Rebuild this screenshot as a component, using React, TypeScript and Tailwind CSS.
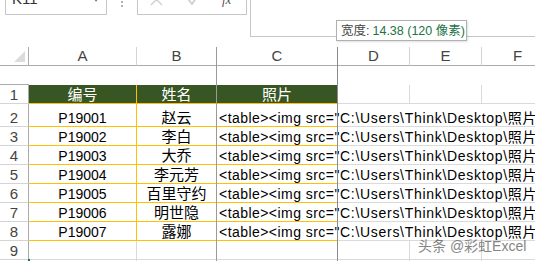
import React from "react";

const FONT = {
  fontFamily: '"Liberation Sans", "Noto Sans CJK SC", sans-serif',
};

const people = [
  ["P19001", "赵云"],
  ["P19002", "李白"],
  ["P19003", "大乔"],
  ["P19004", "李元芳"],
  ["P19005", "百里守约"],
  ["P19006", "明世隐"],
  ["P19007", "露娜"],
];

const cols = ["A", "B", "C", "D", "E", "F"];
const GRID = "grid grid-cols-[29px_108px_80px_121px_72px_72px_72px]";

function RowHead({ n, h }: { n: number; h: string }) {
  return (
    <div
      className={`${h} flex items-end justify-center border-r border-b border-r-[#ababab] border-b-[#d4d4d4] text-[15px] leading-[17px] text-[#444]`}
    >
      {n}
    </div>
  );
}

function Empty({ h, noRight }: { h: string; noRight?: boolean }) {
  return (
    <div
      className={`${h} border-b border-[#dadada] ${noRight ? "" : "border-r"}`}
    />
  );
}

export default function App() {
  return (
    <div
      className="relative h-[261px] w-[535px] overflow-hidden bg-white text-black"
      style={FONT}
    >
      {/* formula bar, cut at the top */}
      <div className="flex h-[47px] items-start">
        <div className="ml-[5px] mt-[-15px] flex h-[30px] w-[102px] items-center justify-between border-x border-b border-[#c6c6c6] px-[6px] text-[15px] text-[#333]">
          <span>K11</span>
          <span className="text-[8px] text-[#666]">▼</span>
        </div>
        <div className="ml-[13px] flex w-[4px] flex-col items-center gap-[2px] pt-[1px]">
          <span className="h-[2px] w-[2px] rounded-full bg-[#999]" />
          <span className="h-[2px] w-[2px] rounded-full bg-[#999]" />
        </div>
        <div className="ml-[13px] mt-[-15px] flex h-[30px] w-[110px] items-center border-x border-b border-[#c6c6c6]">
          <svg className="ml-[12px]" width="13" height="13" viewBox="0 0 13 13">
            <path d="M1 1 L12 12 M12 1 L1 12" stroke="#cfcfcf" strokeWidth="1.4" />
          </svg>
          <svg className="ml-[24px]" width="13" height="13" viewBox="0 0 13 13">
            <path d="M1 6 L5 11 L12 1" stroke="#cfcfcf" strokeWidth="1.8" fill="none" />
          </svg>
          <span className="ml-[22px] font-['Liberation_Serif'] text-[13px] italic text-[#555]">
            fx
          </span>
        </div>
        <div className="ml-[3px] h-[37px] flex-1 border-l border-b border-[#c6c6c6]" />
      </div>

      {/* column header */}
      <div className={GRID}>
        <div className="relative h-[19px] border-r border-b border-r-[#ababab] border-b-[#ababab]">
          <svg className="absolute left-[14px] top-[4px]" width="11" height="11" viewBox="0 0 11 11">
            <path d="M11 0 L11 11 L0 11 Z" fill="#dcdcdc" />
          </svg>
        </div>
        {cols.map((c) => (
          <div
            key={c}
            className="flex h-[19px] items-end justify-center border-r border-b border-r-[#d4d4d4] border-b-[#ababab] text-[15px] leading-[18px] text-[#444]"
          >
            {c}
          </div>
        ))}
        <div className="h-[19px] border-b border-[#ababab]" />
      </div>

      {/* row 1: header */}
      <div className={GRID}>
        <RowHead n={1} h="h-[19px]" />
        <div className="flex h-[19px] items-end justify-center border-r border-b border-[#ffc000] bg-[#375623] text-[15px] leading-[17px] text-white">
          编号
        </div>
        <div className="flex h-[19px] items-end justify-center border-r border-b border-[#ffc000] bg-[#375623] text-[15px] leading-[17px] text-white">
          姓名
        </div>
        <div className="flex h-[19px] items-end justify-center border-r border-b border-[#ffc000] bg-[#375623] text-[15px] leading-[17px] text-white">
          照片
        </div>
        <Empty h="h-[19px]" />
        <Empty h="h-[19px]" />
        <Empty h="h-[19px]" />
      </div>

      {/* data rows */}
      {people.map(([id, name], i) => {
        const h = i === 0 ? "h-[23px]" : "h-[19px]";
        return (
          <div key={id} className={GRID}>
            <RowHead n={i + 2} h={h} />
            <div
              className={`${h} flex items-end justify-center border-r border-b border-[#ffc000] text-[14px] leading-[16px]`}
            >
              {id}
            </div>
            <div
              className={`${h} flex items-end justify-center border-r border-b border-[#ffc000] text-[15px] leading-[17px]`}
            >
              {name}
            </div>
            <div
              className={`${h} flex items-end whitespace-nowrap border-r border-b border-[#ffc000] pl-[2px] text-[14px] leading-[16px]`}
            >
              <span className="tracking-[0.45px]">{"<table><img src="}</span>
              <span className="tracking-[0.7px]">
                {'"C:\\Users\\Think\\Desktop\\照片\\' + name + '.jpg" width="100" height="120"></table>'}
              </span>
            </div>
            <Empty h={h} noRight />
            <Empty h={h} noRight />
            <Empty h={h} noRight />
          </div>
        );
      })}

      {/* empty rows */}
      {[9, 10, 11].map((n) => (
        <div key={n} className={GRID}>
          <RowHead n={n} h="h-[19px]" />
          <Empty h="h-[19px]" />
          <Empty h="h-[19px]" />
          <Empty h="h-[19px]" />
          <Empty h="h-[19px]" />
          <Empty h="h-[19px]" />
          <Empty h="h-[19px]" />
        </div>
      ))}

      {/* column resize guides */}
      <div className="absolute left-[216px] top-[47px] h-[214px] w-px bg-[#9a9a9a]" />
      <div className="absolute left-[337px] top-[47px] h-[214px] w-px bg-[#8c8c8c]" />

      {/* tooltip */}
      <div className="absolute left-[336px] top-[20px] flex h-[21px] w-[131px] items-center whitespace-nowrap border border-[#b0b0b0] bg-white pl-[4px] text-[12.5px] leading-[16px] shadow-[1px_1px_2px_rgba(0,0,0,0.12)]">
        <span className="text-[#444]">宽度:</span>
        <span className="ml-[3px] text-[#217346]">14.38 (120 像素)</span>
      </div>

      {/* watermark */}
      <div className="absolute left-[418px] top-[238px] whitespace-nowrap text-[14px] leading-[16px] text-[#666] opacity-80">
        头条 @彩虹Excel
      </div>
      <div className="absolute left-[28px] top-[259px] h-[2px] w-[2px] bg-[#217346]" />
    </div>
  );
}
